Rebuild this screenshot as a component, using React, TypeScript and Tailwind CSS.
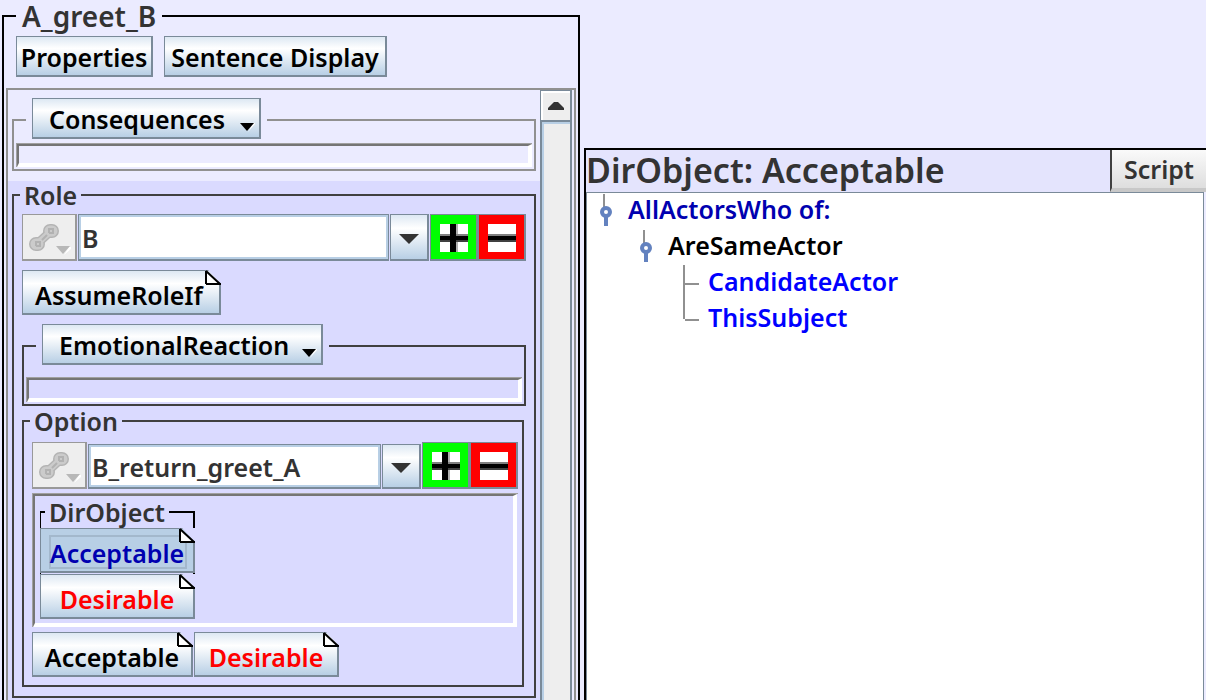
import React, { type ReactNode } from "react";

const FACE =
  "border-t border-l border-b-2 border-r-2 border-[#7a8a99] bg-[linear-gradient(180deg,#dde8f3_0%,#ffffff_30%,#b8cfe5_100%)]";

function Fold() {
  return (
    <svg className="absolute -top-px -right-0.5" width="16" height="16" viewBox="0 0 16 16" aria-hidden="true">
      <path d="M3 0H16V14Z" fill="#dadaff" />
      <path d="M1 1V14H15Z" fill="#fff" />
      <path d="M1 1V14M1 14H16M1 1L15 14" stroke="#000" strokeWidth="2" fill="none" />
    </svg>
  );
}

function MetalButton({ children, className = "" }: { children: ReactNode; className?: string }) {
  return (
    <button type="button" className={`${FACE} h-[41px] pt-0.5 text-black ${className}`}>
      {children}
    </button>
  );
}

function ScriptButton({
  children,
  className = "",
  selected = false,
}: {
  children: ReactNode;
  className?: string;
  selected?: boolean;
}) {
  return (
    <button
      type="button"
      className={`relative block h-[45px] pt-1.5 ${
        selected ? "border-t border-l border-b-2 border-r-2 border-[#7a8a99] bg-[#b8cfe5]" : FACE
      } ${className}`}
    >
      {selected && (
        <span className="absolute top-1.5 right-1.5 bottom-0.5 left-2 border-2 border-[#a3b8cc]" />
      )}
      <span className="relative">{children}</span>
      <Fold />
    </button>
  );
}

function MenuButton({ children, className }: { children: ReactNode; className: string }) {
  return (
    <button
      type="button"
      className={`${FACE} flex h-[41px] items-center justify-between pt-0.5 pr-1 pl-4 text-black ${className}`}
    >
      {children}
      <svg className="mt-4" width="15" height="9" viewBox="0 0 15 9" aria-hidden="true">
        <path d="M8 9L15 1V0H13Z" fill="#fff" />
        <path d="M0 0H14L7 8Z" fill="#000" />
      </svg>
    </button>
  );
}

function ChainButton() {
  return (
    <button
      type="button"
      aria-label="Link"
      className="h-[47px] w-[55px] shrink-0 border-t border-l border-b-2 border-r-2 border-[#999999] bg-[#eeeeee]"
    >
      <svg width="52" height="44" viewBox="0 0 52 44" aria-hidden="true">
        <g fill="none" stroke="#b4b4b4" strokeLinecap="round">
          <path d="M27 16L29 16M13 29L15 29" strokeWidth="14" />
          <path d="M14 29L28 16" strokeWidth="9" />
        </g>
        <g fill="none" stroke="#cbcbcb" strokeLinecap="round">
          <path d="M27 16L29 16M13 29L15 29" strokeWidth="11" />
          <path d="M14 29L28 16" strokeWidth="6" />
        </g>
        <path
          d="M13 31V27H17V31H13M26 18V14H30V18H26M19 25L24 20"
          fill="none"
          stroke="#b2b2b2"
          strokeWidth="2"
        />
        <path d="M41 40L48 34V32H46Z" fill="#fff" />
        <path d="M33 31H47L40 39Z" fill="#b8b8b8" />
      </svg>
    </button>
  );
}

function SignButton({ kind }: { kind: "plus" | "minus" }) {
  const plus = kind === "plus";
  return (
    <button
      type="button"
      aria-label={plus ? "Add" : "Remove"}
      className={`flex h-[47px] w-12 shrink-0 border-t border-l border-b-2 border-r-2 border-[#7a8a99] pt-[9px] pl-[9px] ${
        plus ? "bg-[#00ff00]" : "bg-[#ff0000]"
      }`}
    >
      <svg width="28" height="28" viewBox="0 0 28 28" shapeRendering="crispEdges" aria-hidden="true">
        <rect width="28" height="28" fill="#fff" />
        {plus && <rect x="16" width="2" height="28" fill="#b0b0b0" />}
        <rect y="10" width="28" height="2" fill="#808080" />
        <rect y="12" width="28" height="4" fill="#000" />
        <rect y="16" width="28" height="2" fill="#404040" />
        {plus && <rect x="10" width="6" height="28" fill="#000" />}
      </svg>
    </button>
  );
}

function PickerRow({ label, value, fieldHeight }: { label: string; value: string; fieldHeight: string }) {
  return (
    <div className="flex items-end">
      <ChainButton />
      <input
        aria-label={label}
        defaultValue={value}
        className={`ml-px min-w-0 flex-1 border border-b-2 border-[#7a8a99] bg-white pt-0.5 pl-[3px] text-[#333333] shadow-[inset_0_0_0_2px_#b8cfe5] outline-none ${fieldHeight}`}
      />
      <button
        type="button"
        aria-label={`Choose ${label}`}
        className={`${FACE} ml-px flex w-[39px] shrink-0 items-center justify-center pt-1 ${fieldHeight}`}
      >
        <svg width="20" height="10" viewBox="0 0 20 10" aria-hidden="true">
          <path d="M0 0H20L10 10Z" fill="#333333" />
        </svg>
      </button>
      <div className="ml-px flex">
        <SignButton kind="plus" />
        <SignButton kind="minus" />
      </div>
    </div>
  );
}

function Inset({ children, className = "" }: { children?: ReactNode; className?: string }) {
  return (
    <div className={`border-t border-l border-[#a0a0a0] ${className}`}>
      <div className="h-full border-t-2 border-l-2 border-r-4 border-b-4 border-t-[#757575] border-r-white border-b-white border-l-[#757575]">
        {children}
      </div>
    </div>
  );
}

function Handle() {
  return (
    <svg width="30" height="36" viewBox="0 0 30 36" className="shrink-0" aria-hidden="true">
      <rect x="5" y="1" width="2" height="13" fill="#909090" />
      <rect x="6" y="24" width="4" height="9" fill="#6382bf" />
      <circle cx="8" cy="19" r="4" fill="#fff" stroke="#6382bf" strokeWidth="4" />
    </svg>
  );
}

function Branch({ last = false }: { last?: boolean }) {
  return (
    <svg width="30" height="36" viewBox="0 0 30 36" className="shrink-0" aria-hidden="true">
      <rect x="5" width="2" height={last ? 18 : 36} fill="#909090" />
      <rect x="7" y="18" width="14" height="2" fill="#909090" />
    </svg>
  );
}

export default function App() {
  return (
    <main className="grid h-screen grid-cols-[578fr_622fr] gap-1 overflow-hidden bg-[#ebebff] pl-0.5 font-['Noto_Sans',sans-serif] text-[25px] leading-7 font-semibold text-[#333333]">
      <fieldset className="h-[calc(100vh+8px)] min-w-0 border-2 border-black px-0.5">
        <legend className="ml-2.5 h-8 px-1.5 text-[28px] leading-8">A_greet_B</legend>
        <div className="flex gap-[11px] pt-1 pl-2.5">
          <MetalButton className="w-[137px]">Properties</MetalButton>
          <MetalButton className="w-[223px]">Sentence Display</MetalButton>
        </div>

        <div className="mt-[11px] flex h-[calc(100vh-80px)] border-2 border-b-0 border-[#909090]">
          <div className="min-w-0 flex-1 overflow-hidden bg-[#dadaff]">
            <div className="bg-[#ebebff] px-1 pt-2 pb-2.5">
              <fieldset className="min-w-0 border-2 border-[#909090] px-0.5 pb-0.5">
                <legend className="ml-2.5 h-11 px-1.5">
                  <MenuButton className="w-[229px]">Consequences</MenuButton>
                </legend>
                <Inset className="mt-px h-6" />
              </fieldset>
            </div>

            <fieldset className="mx-1 min-w-0 border-2 border-[#404040] px-2 pb-[9px]">
              <legend className="-ml-0.5 h-7 px-1">Role</legend>
              <div className="pt-[5px]">
                <PickerRow label="Role" value="B" fieldHeight="h-[47px]" />
              </div>
              <div className="pt-[9px] pb-[9px]">
                <ScriptButton className="w-[199px] pr-1 text-black">AssumeRoleIf</ScriptButton>
              </div>
              <fieldset className="min-w-0 border-2 border-[#404040] px-0.5 pb-0.5">
                <legend className="ml-2.5 h-11 px-1.5">
                  <MenuButton className="w-[281px]">EmotionalReaction</MenuButton>
                </legend>
                <Inset className="mt-[9px] h-[25px]" />
              </fieldset>

              <fieldset className="mr-0.5 mt-px min-w-0 border-2 border-[#404040] pr-1 pb-2 pl-2">
                <legend className="-ml-0.5 h-7 px-1">Option</legend>
                <div className="pt-[7px]">
                  <PickerRow label="Option" value="B_return_greet_A" fieldHeight="h-[45px]" />
                </div>
                <Inset className="mt-1 h-[134px] pr-px">
                  <fieldset className="ml-[5px] w-[155px] border-t-2 border-r-2 border-l border-black">
                    <legend className="ml-1 h-8 px-1 leading-8">DirObject</legend>
                    <div className="-mr-0.5 -ml-px space-y-px">
                      <ScriptButton selected className="w-full text-[#0000b0]">
                        Acceptable
                      </ScriptButton>
                      <ScriptButton className="w-full text-[#ff0000]">Desirable</ScriptButton>
                    </div>
                  </fieldset>
                </Inset>
                <div className="flex gap-px pt-[5px]">
                  <ScriptButton className="w-[161px] text-black">Acceptable</ScriptButton>
                  <ScriptButton className="w-[145px] text-[#ff0000]">Desirable</ScriptButton>
                </div>
              </fieldset>
            </fieldset>
          </div>

          <div className="mr-0.5 flex w-8 shrink-0 flex-col">
            <button
              type="button"
              aria-label="Scroll up"
              className="flex h-[30px] items-center justify-center border-t border-l border-r-2 border-[#7a8a99] bg-[#eeeeee] shadow-[inset_2px_2px_0_#ffffff]"
            >
              <svg width="16" height="8" viewBox="0 0 16 8" aria-hidden="true">
                <path d="M0 8V6L6 0H10L16 6V8Z" fill="#333333" />
              </svg>
            </button>
            <div className="flex-1 border-t-2 border-r-2 border-l-2 border-[#7a8a99] bg-[#eeeeee] shadow-[inset_2px_2px_0_#b8cfe5]" />
          </div>
        </div>
      </fieldset>

      <section className="mt-[148px] flex min-w-0 flex-col border-t-2 border-l-2 border-black">
        <header className="flex h-[42px] bg-[#e4e4fd]">
          <h1 className="min-w-0 flex-1 text-[34px] leading-10 whitespace-nowrap">DirObject: Acceptable</h1>
          <button
            type="button"
            className="w-24 border-b-4 border-l-2 border-b-[#c8c8c8] border-l-[#404040] bg-[linear-gradient(180deg,#fafafa,#dedede)]"
          >
            Script
          </button>
        </header>
        <div className="mr-0.5 flex-1 border-t border-r border-l border-[#7a8a99] bg-white pl-[11px]">
          <ul className="leading-8">
            <li>
              <div className="flex text-[#0000b0]">
                <Handle />
                AllActorsWho of:
              </div>
              <ul className="pl-10">
                <li>
                  <div className="flex text-black">
                    <Handle />
                    AreSameActor
                  </div>
                  <ul className="pl-10 text-[#0000ff]">
                    <li className="flex">
                      <Branch />
                      CandidateActor
                    </li>
                    <li className="flex">
                      <Branch last />
                      ThisSubject
                    </li>
                  </ul>
                </li>
              </ul>
            </li>
          </ul>
        </div>
      </section>
    </main>
  );
}
